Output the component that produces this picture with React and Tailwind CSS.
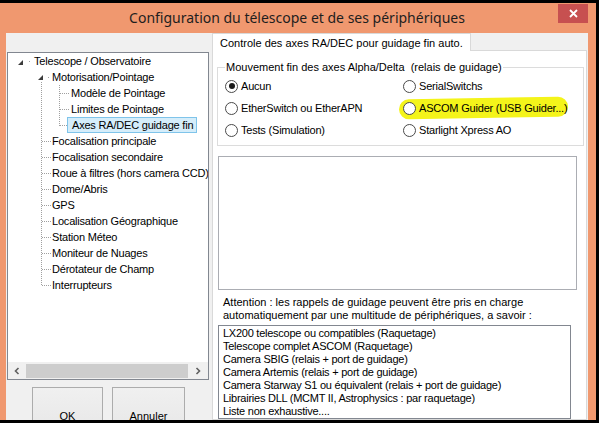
import React from "react";

const treeRows = [
  { label: "Telescope / Observatoire", level: 0 },
  { label: "Motorisation/Pointage", level: 1 },
  { label: "Modèle de Pointage", level: 2 },
  { label: "Limites de Pointage", level: 2 },
  { label: "Axes RA/DEC guidage fin", level: 2, selected: true },
  { label: "Focalisation principale", level: 1 },
  { label: "Focalisation secondaire", level: 1 },
  { label: "Roue à filtres (hors camera CCD)", level: 1 },
  { label: "Dome/Abris", level: 1 },
  { label: "GPS", level: 1 },
  { label: "Localisation Géographique", level: 1 },
  { label: "Station Méteo", level: 1 },
  { label: "Moniteur de Nuages", level: 1 },
  { label: "Dérotateur de Champ", level: 1 },
  { label: "Interrupteurs", level: 1 },
];

const indent = { 0: "pl-[26px]", 1: "pl-[44px]", 2: "pl-[63px]" };

const radios = [
  { label: "Aucun", checked: true },
  { label: "SerialSwitchs" },
  { label: "EtherSwitch ou EtherAPN" },
  { label: "ASCOM Guider (USB Guider...)", marked: true },
  { label: "Tests (Simulation)" },
  { label: "Starlight Xpress AO" },
];

const supported = [
  "LX200 telescope ou compatibles (Raquetage)",
  "Telescope complet ASCOM (Raquetage)",
  "Camera SBIG (relais + port de guidage)",
  "Camera Artemis (relais + port de guidage)",
  "Camera Starway S1 ou équivalent (relais + port de guidage)",
  "Librairies DLL (MCMT II, Astrophysics : par raquetage)",
  "Liste non exhaustive....",
];

// dotted connector lines + expand glyphs of the tree
function TreeLines() {
  const level1 = [88, 104, 120, 136, 152, 168, 184, 200, 216, 232];
  const level2 = [40, 56, 72];
  return (
    <svg className="absolute left-0 top-0 pointer-events-none" width="200" height="300">
      <g stroke="#a0a0a0" strokeWidth="1" strokeDasharray="1 1" shapeRendering="crispEdges">
        <line x1="33.5" y1="29" x2="33.5" y2="233" />
        {level1.map((y) => (
          <line key={y} x1="34" y1={y + 0.5} x2="43" y2={y + 0.5} />
        ))}
        <line x1="51.5" y1="32" x2="51.5" y2="73" />
        {level2.map((y) => (
          <line key={y} x1="52" y1={y + 0.5} x2="61" y2={y + 0.5} />
        ))}
      </g>
      <rect x="21" y="8" width="1" height="1" fill="#a0a0a0" />
      <rect x="40" y="24" width="1" height="1" fill="#a0a0a0" />
      <polygon points="15,7 15,12 10,12" fill="#3c3c3c" />
      <polygon points="35,22 35,27 30,27" fill="#3c3c3c" />
    </svg>
  );
}

function Chevron({ dir }) {
  return (
    <svg width="6" height="8" viewBox="0 0 6 8">
      <path
        d={dir === "left" ? "M4.5 1 L1.5 4 L4.5 7" : "M1.5 1 L4.5 4 L1.5 7"}
        fill="none"
        stroke="#606060"
        strokeWidth="1.6"
      />
    </svg>
  );
}

function Radio({ label, checked, marked }) {
  return (
    <div className="relative flex items-center h-[22px]">
      {marked && (
        <span className="absolute left-[-4px] top-[1px] h-[20px] w-[169px] rounded-[10px] bg-[#f4f41a] -rotate-[1deg]" />
      )}
      <span className="relative flex items-center justify-center w-[13px] h-[13px] rounded-full border border-[#4a4a4a] bg-white">
        {checked && <span className="w-[6px] h-[6px] rounded-full bg-[#1a1a1a]" />}
      </span>
      <span className="relative ml-[3px] tracking-[-0.2px]">{label}</span>
    </div>
  );
}

export default function App() {
  return (
    <div className="w-[599px] h-[423px] bg-black overflow-hidden pt-[3px] font-['Liberation_Sans',Arial,sans-serif] text-[11px] leading-[13px] text-black">
      <div className="w-[596px] h-[417px] bg-[#f0986f] flex flex-col">
        {/* title bar */}
        <div className="h-[30px] shrink-0 grid grid-cols-[1fr_auto_1fr] pl-[6px] pr-[8px]">
          <div />
          <div className="pt-[5px] font-['Noto_Sans',sans-serif] text-[14px] leading-[20px] text-[#1e1e1e]">
            Configuration du télescope et de ses périphériques
          </div>
          <div className="flex justify-end items-start pt-[1px]">
            <div className="w-[30px] h-[19px] bg-[#c75050] flex items-center justify-center">
              <svg width="9" height="9" viewBox="0 0 9 9">
                <path d="M1 1 L8 8 M8 1 L1 8" stroke="white" strokeWidth="1.8" />
              </svg>
            </div>
          </div>
        </div>

        {/* client area */}
        <div className="flex-1 flex pl-[6px] pr-[8px] overflow-hidden">
          <div className="flex-1 flex bg-[#f0f0f0] overflow-hidden">
            {/* left: tree + buttons */}
            <div className="w-[206px] shrink-0 flex flex-col">
              <div className="ml-[1px] mt-[19px] w-[202px] h-[328px] shrink-0 border border-[#828790] bg-white flex flex-col">
                <div className="relative flex-1 tracking-[-0.2px] overflow-hidden">
                  <TreeLines />
                  {treeRows.map((row) => (
                    <div key={row.label} className={`relative h-[16px] flex items-center whitespace-nowrap ${row.selected ? "pl-[59px]" : indent[row.level]}`}>
                      {row.selected ? (
                        <span className="h-[16px] flex items-center border border-[#7fc4ea] bg-[#d5edfa] pl-[4px] pr-[3px]">
                          {row.label}
                        </span>
                      ) : (
                        row.label
                      )}
                    </div>
                  ))}
                </div>
                <div className="h-[17px] shrink-0 bg-[#f0f0f0] flex items-center">
                  <div className="w-[17px] flex justify-center">
                    <Chevron dir="left" />
                  </div>
                  <div className="ml-[1px] w-[162px] h-[14px] bg-[#cdcdcd]" />
                  <div className="flex-1 flex justify-center">
                    <Chevron dir="right" />
                  </div>
                </div>
              </div>
              <div className="flex shrink-0 mt-[7px] pl-[26px] gap-[9px]">
                <button className="w-[71px] h-[58px] border border-[#acacac] bg-gradient-to-b from-[#f0f0f0] to-[#e5e5e5]">
                  OK
                </button>
                <button className="w-[73px] h-[58px] border border-[#acacac] bg-gradient-to-b from-[#f0f0f0] to-[#e5e5e5]">
                  Annuler
                </button>
              </div>
            </div>

            {/* right: tab control */}
            <div className="w-[375px] shrink-0 flex flex-col">
              <div className="flex">
                <div className="relative z-10 -mb-[1px] h-[18px] border border-b-0 border-[#d9d9d9] bg-white px-[7px] pt-[3px] whitespace-nowrap">
                  Controle des axes RA/DEC pour guidage fin auto.
                </div>
              </div>
              <div className="flex-1 border border-[#d9d9d9] bg-white flex flex-col">
                <fieldset className="mt-[9px] ml-[4px] mr-[2px] border border-[#dcdcdc] pl-[7px] pt-[1px] pb-[4px]">
                  <legend className="leading-[14px] px-[1px]">
                    Mouvement fin des axes Alpha/Delta&nbsp; (relais de guidage)
                  </legend>
                  <div className="grid grid-cols-[178px_1fr]">
                    {radios.map((r) => (
                      <Radio key={r.label} {...r} />
                    ))}
                  </div>
                </fieldset>
                <div className="mt-[10px] ml-[5px] w-[359px] h-[134px] shrink-0 border border-[#abadb3] bg-white" />
                <p className="mt-[6px] ml-[10px]">
                  Attention : les rappels de guidage peuvent être pris en charge
                  <br />
                  automatiquement par une multitude de périphériques, a savoir :
                </p>
                <div className="mt-[3px] ml-[5px] w-[353px] h-[94px] shrink-0 border border-[#828790] bg-white pl-[4px] pt-[1px] tracking-[-0.25px]">
                  {supported.map((s) => (
                    <div key={s} className="whitespace-nowrap">{s}</div>
                  ))}
                </div>
              </div>
            </div>
          </div>
        </div>
      </div>
    </div>
  );
}
